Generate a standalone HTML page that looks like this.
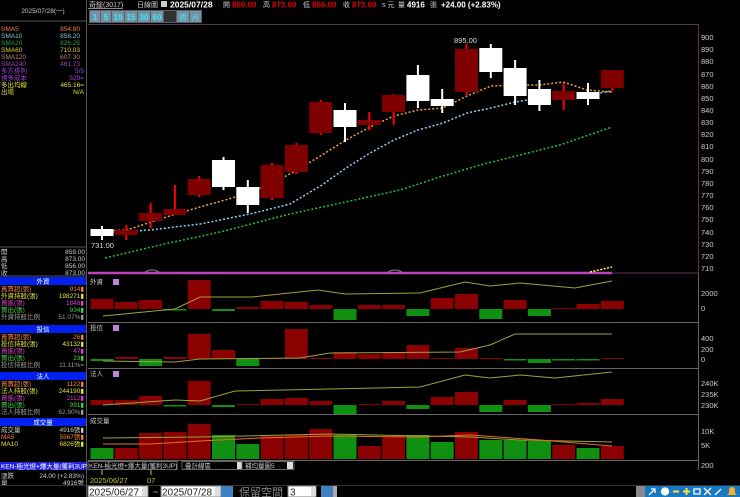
<!DOCTYPE html>
<html><head><meta charset="utf-8"><style>
html,body{margin:0;padding:0;background:#000;width:740px;height:497px;overflow:hidden}
svg{display:block}
text{font-family:"Liberation Sans","Noto Sans CJK TC",sans-serif}
</style></head><body>
<svg width="740" height="497" viewBox="0 0 740 497" xmlns="http://www.w3.org/2000/svg">
<rect width="740" height="497" fill="#000"/>
<line x1="86.5" y1="0" x2="86.5" y2="497" stroke="#555"/>
<line x1="0" y1="21" x2="86" y2="21" stroke="#555"/>
<line x1="0" y1="247" x2="86" y2="247" stroke="#555"/>
<g font-size="6.5">
<text x="43" y="13" fill="#ccc" text-anchor="middle">2025/07/28(一)</text>
<text x="1" y="31" fill="#f08040">SMA5</text><text x="80" y="31" fill="#f08040" text-anchor="end">854.80</text>
<text x="1" y="38" fill="#80c0e0">SMA10</text><text x="80" y="38" fill="#80c0e0" text-anchor="end">858.20</text>
<text x="1" y="45" fill="#20a040">SMA20</text><text x="80" y="45" fill="#20a040" text-anchor="end">826.25</text>
<text x="1" y="52" fill="#e0d040">SMA60</text><text x="80" y="52" fill="#e0d040" text-anchor="end">710.03</text>
<text x="1" y="59" fill="#c08080">SMA120</text><text x="80" y="59" fill="#c08080" text-anchor="end">607.30</text>
<text x="1" y="66" fill="#a040c0">SMA240</text><text x="80" y="66" fill="#a040c0" text-anchor="end">461.73</text>
<text x="1" y="73" fill="#a040e0">多方排列</text><text x="84" y="73" fill="#a040e0" text-anchor="end">5/5</text>
<text x="1" y="80" fill="#a040e0">視多成本</text><text x="84" y="80" fill="#a040e0" text-anchor="end">529=</text>
<text x="1" y="87" fill="#e0e040">多出均線</text><text x="84" y="87" fill="#e0e040" text-anchor="end">465.16=</text>
<text x="1" y="94" fill="#e0e040">出場</text><text x="84" y="94" fill="#e0e040" text-anchor="end">N/A</text>
<g fill="#ccc">
<text x="1" y="254">開</text><text x="85" y="254" text-anchor="end">859.00</text>
<text x="1" y="261">高</text><text x="85" y="261" text-anchor="end">873.00</text>
<text x="1" y="268">低</text><text x="85" y="268" text-anchor="end">856.00</text>
<text x="1" y="275">收</text><text x="85" y="275" text-anchor="end">873.00</text>
</g>
</g>
<line x1="0" y1="276" x2="86" y2="276" stroke="#555"/>
<g font-size="6.5">
<rect x="0" y="277" width="86" height="8" fill="#0020f0"/><text x="43" y="283.5" fill="#fff" text-anchor="middle">外資</text>
<text x="1" y="291" fill="#f08040">買賣超(張)</text><text x="84" y="291" fill="#f08040" text-anchor="end">914▮</text>
<text x="1" y="298" fill="#e0e040">外資持股(張)</text><text x="84" y="298" fill="#e0e040" text-anchor="end">198271▮</text>
<text x="1" y="305" fill="#d040d0">買進(張)</text><text x="84" y="305" fill="#d040d0" text-anchor="end">1848▮</text>
<text x="1" y="312" fill="#40d040">賣出(張)</text><text x="84" y="312" fill="#40d040" text-anchor="end">934▮</text>
<text x="1" y="319" fill="#999">外資持股比例</text><text x="84" y="319" fill="#999" text-anchor="end">51.07%▮</text>
<rect x="0" y="325" width="86" height="8" fill="#0020f0"/><text x="43" y="331.5" fill="#fff" text-anchor="middle">投信</text>
<text x="1" y="339" fill="#f08040">買賣超(張)</text><text x="84" y="339" fill="#f08040" text-anchor="end">26▮</text>
<text x="1" y="346" fill="#e0e040">投信持股(張)</text><text x="84" y="346" fill="#e0e040" text-anchor="end">43132▮</text>
<text x="1" y="353" fill="#d040d0">買進(張)</text><text x="84" y="353" fill="#d040d0" text-anchor="end">47▮</text>
<text x="1" y="360" fill="#40d040">賣出(張)</text><text x="84" y="360" fill="#40d040" text-anchor="end">23▮</text>
<text x="1" y="367" fill="#999">投信持股比例</text><text x="84" y="367" fill="#999" text-anchor="end">11.11%=</text>
<rect x="0" y="372" width="86" height="8" fill="#0020f0"/><text x="43" y="378.5" fill="#fff" text-anchor="middle">法人</text>
<text x="1" y="386" fill="#f08040">買賣超(張)</text><text x="84" y="386" fill="#f08040" text-anchor="end">1122▮</text>
<text x="1" y="393" fill="#e0e040">法人持股(張)</text><text x="84" y="393" fill="#e0e040" text-anchor="end">244190▮</text>
<text x="1" y="400" fill="#d040d0">買進(張)</text><text x="84" y="400" fill="#d040d0" text-anchor="end">2112▮</text>
<text x="1" y="407" fill="#40d040">賣出(張)</text><text x="84" y="407" fill="#40d040" text-anchor="end">991▮</text>
<text x="1" y="414" fill="#999">法人持股比例</text><text x="84" y="414" fill="#999" text-anchor="end">62.90%▮</text>
<rect x="0" y="418" width="86" height="8" fill="#0020f0"/><text x="43" y="424.5" fill="#fff" text-anchor="middle">成交量</text>
<text x="1" y="432" fill="#ccc">成交量</text><text x="84" y="432" fill="#ccc" text-anchor="end">4916張▮</text>
<text x="1" y="439" fill="#f08040">MA5</text><text x="84" y="439" fill="#f08040" text-anchor="end">5567張▮</text>
<text x="1" y="446" fill="#e0e040">MA10</text><text x="84" y="446" fill="#e0e040" text-anchor="end">6826張▮</text>
<rect x="0" y="462" width="86" height="8" fill="#2020e0"/><text x="1" y="468.5" fill="#fff">KEN-極光燈+爆大量(獲利3UP)</text>
<text x="1" y="478" fill="#ccc">漲跌</text><text x="84" y="478" fill="#ccc" text-anchor="end">24.00 (+2.83%)</text>
<text x="1" y="485" fill="#ccc">量</text><text x="84" y="485" fill="#ccc" text-anchor="end">4916張</text>
</g>
<g font-size="7">
<text x="89" y="7" fill="#ccc">奇鋐(3017)</text>
<line x1="88" y1="8.5" x2="123" y2="8.5" stroke="#888"/>
<text x="137" y="7" fill="#ccc">日線圖</text>
<rect x="161" y="1" width="6" height="6" fill="#ccc"/>
<text x="170" y="7.5" fill="#fff" font-weight="bold" font-size="8.5">2025/07/28</text>
<text x="223" y="7" fill="#ccc">開</text><text x="232" y="7.5" fill="#e00000" font-weight="bold" font-size="8">859.00</text>
<text x="263" y="7" fill="#ccc">高</text><text x="272" y="7.5" fill="#e00000" font-weight="bold" font-size="8">873.00</text>
<text x="303" y="7" fill="#ccc">低</text><text x="312" y="7.5" fill="#e00000" font-weight="bold" font-size="8">856.00</text>
<text x="343" y="7" fill="#ccc">收</text><text x="352" y="7.5" fill="#e00000" font-weight="bold" font-size="8">873.00</text>
<text x="382" y="7" fill="#ccc">s 元</text><text x="398" y="7" fill="#ccc">量</text>
<text x="407" y="7.5" fill="#fff" font-weight="bold" font-size="8">4916</text><text x="430" y="7" fill="#ccc">張</text>
<text x="441" y="7.5" fill="#fff" font-weight="bold" font-size="8">+24.00 (+2.83%)</text>
</g>
<rect x="89" y="10" width="113" height="13" fill="#506070"/>
<rect x="90" y="11" width="10" height="11" fill="#7890a0"/>
<rect x="101" y="11" width="10" height="11" fill="#7890a0"/>
<rect x="112" y="11" width="12" height="11" fill="#7890a0"/>
<rect x="125" y="11" width="12" height="11" fill="#7890a0"/>
<rect x="138" y="11" width="12" height="11" fill="#7890a0"/>
<rect x="151" y="11" width="12" height="11" fill="#7890a0"/>
<rect x="164" y="11" width="12" height="11" fill="#303030"/>
<rect x="177" y="11" width="12" height="11" fill="#7890a0"/>
<rect x="190" y="11" width="11" height="11" fill="#7890a0"/>
<g font-size="8" font-weight="bold" fill="#40e8ff" text-anchor="middle">
<text x="95" y="19.8">1</text><text x="106" y="19.8">5</text><text x="118" y="19.8">10</text><text x="131" y="19.8">15</text><text x="144" y="19.8">30</text><text x="157" y="19.8">60</text>
<text x="183" y="19.5" font-size="7" font-weight="normal">週</text><text x="195.5" y="19.5" font-size="7" font-weight="normal">月</text>
</g>
<polyline points="88,24.5 698.5,24.5 698.5,273" fill="none" stroke="#603050"/>
<g font-size="7.5" fill="#ccc">
<text x="701" y="40">900</text><text x="701" y="52">890</text><text x="701" y="64">880</text><text x="701" y="77">870</text><text x="701" y="89">860</text><text x="701" y="101">850</text><text x="701" y="113">840</text><text x="701" y="125">830</text><text x="701" y="137">820</text><text x="701" y="149">810</text><text x="701" y="162">800</text><text x="701" y="174">790</text><text x="701" y="186">780</text><text x="701" y="198">770</text><text x="701" y="210">760</text><text x="701" y="222">750</text><text x="701" y="235">740</text><text x="701" y="247">730</text><text x="701" y="259">720</text><text x="701" y="271">710</text>
<text x="701" y="296">2000</text><text x="701" y="311">0</text>
<text x="701" y="341">400</text><text x="701" y="352">200</text><text x="701" y="362">0</text>
<text x="701" y="386">240K</text><text x="701" y="397">235K</text><text x="701" y="408">230K</text>
<text x="701" y="434">10K</text><text x="701" y="448">5K</text><text x="701" y="468">200</text>
</g>
<polyline points="105,258 160,245 220,232 290,214 350,201 400,190 440,177 480,165 520,155 560,145 612,127" fill="none" stroke="#20c040" stroke-width="1.5" stroke-dasharray="2,2"/>
<polyline points="100,233 150,230 200,224 250,214 290,204 322,185 346,168 370,153 394,140 418,130 443,123 467,113 491,108 515,102 539,98 563,96 587,95 612,91" fill="none" stroke="#90d0f0" stroke-width="1.5" stroke-dasharray="2,2"/>
<polyline points="102,231 127,230 151,222 176,214 200,207 225,200 249,193 273,183 297,170 322,155 346,140 370,127 394,116 418,110 443,108 467,96 491,86 515,85 539,85 563,82 587,90 612,92" fill="none" stroke="#f0a040" stroke-width="1.5" stroke-dasharray="2,2"/>
<g stroke-width="2">
<line x1="102" y1="226" x2="102" y2="240" stroke="#fff"/><rect x="90.5" y="229" width="23" height="7" fill="#fff"/>
<line x1="126.3" y1="225" x2="126.3" y2="240" stroke="#f00"/><rect x="114.8" y="230" width="23" height="5" fill="#800000"/>
<line x1="150.6" y1="203" x2="150.6" y2="228" stroke="#f00"/><rect x="139.1" y="213" width="23" height="8" fill="#800000"/>
<line x1="174.9" y1="185" x2="174.9" y2="215" stroke="#f00"/><rect x="163.4" y="209" width="23" height="6" fill="#800000"/>
<line x1="199.2" y1="176" x2="199.2" y2="197" stroke="#f00"/><rect x="187.7" y="179" width="23" height="16" fill="#800000"/>
<line x1="223.5" y1="157" x2="223.5" y2="190" stroke="#fff"/><rect x="212" y="160" width="23" height="27" fill="#fff"/>
<line x1="247.8" y1="180" x2="247.8" y2="213" stroke="#fff"/><rect x="236.3" y="187" width="23" height="18" fill="#fff"/>
<line x1="272.1" y1="163" x2="272.1" y2="200" stroke="#f00"/><rect x="260.6" y="165" width="23" height="33" fill="#800000"/>
<line x1="296.4" y1="143" x2="296.4" y2="174" stroke="#f00"/><rect x="284.9" y="145" width="23" height="27" fill="#800000"/>
<line x1="320.7" y1="100" x2="320.7" y2="135" stroke="#f00"/><rect x="309.2" y="102" width="23" height="31" fill="#800000"/>
<line x1="345" y1="103" x2="345" y2="142" stroke="#fff"/><rect x="333.5" y="110" width="23" height="17" fill="#fff"/>
<line x1="369.3" y1="112" x2="369.3" y2="130" stroke="#f00"/><rect x="357.8" y="120" width="23" height="5" fill="#800000"/>
<line x1="393.6" y1="94" x2="393.6" y2="125" stroke="#f00"/><rect x="382.1" y="95" width="23" height="17" fill="#800000"/>
<line x1="417.9" y1="65" x2="417.9" y2="108" stroke="#fff"/><rect x="406.4" y="75" width="23" height="26" fill="#fff"/>
<line x1="442.2" y1="89" x2="442.2" y2="113" stroke="#fff"/><rect x="430.7" y="99" width="23" height="7" fill="#fff"/>
<line x1="466.5" y1="44" x2="466.5" y2="95" stroke="#f00"/><rect x="455" y="49" width="23" height="43" fill="#800000"/>
<line x1="490.8" y1="44" x2="490.8" y2="78" stroke="#fff"/><rect x="479.3" y="48" width="23" height="24" fill="#fff"/>
<line x1="515.1" y1="60" x2="515.1" y2="105" stroke="#fff"/><rect x="503.6" y="68" width="23" height="28" fill="#fff"/>
<line x1="539.4" y1="80" x2="539.4" y2="111" stroke="#fff"/><rect x="527.9" y="89" width="23" height="16" fill="#fff"/>
<line x1="563.7" y1="83" x2="563.7" y2="110" stroke="#f00"/><rect x="552.2" y="91" width="23" height="9" fill="#800000"/>
<line x1="588" y1="83" x2="588" y2="105" stroke="#fff"/><rect x="576.5" y="92" width="23" height="7" fill="#fff"/>
<line x1="612.3" y1="70" x2="612.3" y2="91" stroke="#f00"/><rect x="600.8" y="70" width="23" height="18" fill="#800000"/>
</g>
<text x="454" y="43" font-size="7.5" fill="#ddd">895.00</text>
<text x="91" y="248" font-size="7.5" fill="#ddd">731.00</text>
<line x1="88" y1="273" x2="612" y2="273" stroke="#c040c0" stroke-width="2.5"/>
<line x1="612" y1="273" x2="698" y2="273" stroke="#603050"/>
<polyline points="590,272 612,267" stroke="#ffff40" stroke-width="1.5" stroke-dasharray="2,1.5"/>
<path d="M145,272 Q152,268 159,272 M388,272 Q395,268 402,272" stroke="#888" fill="none"/>
<g stroke="#666">
<line x1="88" y1="322.5" x2="698" y2="322.5"/><line x1="88" y1="368.5" x2="698" y2="368.5"/>
<line x1="88" y1="414.5" x2="698" y2="414.5"/><line x1="88" y1="460.5" x2="698" y2="460.5"/>
<line x1="698.5" y1="273" x2="698.5" y2="470"/>
</g>
<g font-size="6.5" fill="#ccc">
<text x="90" y="284">外資</text><text x="90" y="330">投信</text><text x="90" y="376">法人</text><text x="90" y="423">成交量</text>
</g>
<g fill="#c080e0"><rect x="113" y="279" width="6" height="6"/><rect x="113" y="325" width="6" height="6"/><rect x="113" y="371" width="6" height="6"/></g>
<g fill="#8b0000">
<rect x="90.5" y="299" width="23" height="10"/><rect x="114.8" y="302" width="23" height="7"/><rect x="139.1" y="300" width="23" height="9"/><rect x="187.7" y="280" width="23" height="29"/><rect x="236.3" y="307" width="23" height="2"/><rect x="260.6" y="301" width="23" height="8"/><rect x="284.9" y="302" width="23" height="7"/><rect x="309.2" y="305" width="23" height="4"/><rect x="357.8" y="305" width="23" height="4"/><rect x="382.1" y="305" width="23" height="4"/><rect x="430.7" y="298" width="23" height="11"/><rect x="455" y="294" width="23" height="15"/><rect x="503.6" y="300" width="23" height="9"/><rect x="552.2" y="308" width="23" height="1"/><rect x="576.5" y="304" width="23" height="5"/><rect x="600.8" y="301" width="23" height="8"/>
</g>
<g fill="#109010">
<rect x="163.4" y="309" width="23" height="1.5"/><rect x="212" y="309" width="23" height="2"/><rect x="333.5" y="309" width="23" height="11"/><rect x="406.4" y="309" width="23" height="7"/><rect x="479.3" y="309" width="23" height="10"/><rect x="527.9" y="309" width="23" height="7"/>
</g>
<polyline points="103,316 175,309 200,297 252,297 318,290 345,294 420,293 465,282 490,286 520,283 575,288 612,281" fill="none" stroke="#a0a040"/>
<g fill="#8b0000">
<rect x="114.8" y="357" width="23" height="2"/><rect x="163.4" y="357" width="23" height="2"/><rect x="187.7" y="334" width="23" height="25"/><rect x="212" y="350" width="23" height="9"/><rect x="260.6" y="358" width="23" height="1"/><rect x="284.9" y="329" width="23" height="30"/><rect x="309.2" y="358" width="23" height="1"/><rect x="333.5" y="352" width="23" height="7"/><rect x="357.8" y="354" width="23" height="5"/><rect x="382.1" y="352" width="23" height="7"/><rect x="406.4" y="345" width="23" height="14"/><rect x="430.7" y="358" width="23" height="1"/><rect x="455" y="348" width="23" height="11"/><rect x="479.3" y="358" width="23" height="1"/><rect x="600.8" y="358" width="23" height="1"/>
</g>
<g fill="#109010">
<rect x="90.5" y="359" width="23" height="2"/><rect x="139.1" y="359" width="23" height="7"/><rect x="236.3" y="359" width="23" height="7"/><rect x="503.6" y="359" width="23" height="1.5"/><rect x="527.9" y="359" width="23" height="4"/><rect x="552.2" y="359" width="23" height="1.5"/><rect x="576.5" y="359" width="23" height="1.5"/>
</g>
<polyline points="103,361 175,362 200,359 300,358 330,353 460,352 490,345 515,334 612,334" fill="none" stroke="#a0a040"/>
<g fill="#8b0000">
<rect x="90.5" y="400" width="23" height="5"/><rect x="114.8" y="400" width="23" height="5"/><rect x="139.1" y="396" width="23" height="9"/><rect x="187.7" y="381" width="23" height="24"/><rect x="236.3" y="404" width="23" height="1"/><rect x="260.6" y="399" width="23" height="6"/><rect x="284.9" y="398" width="23" height="7"/><rect x="309.2" y="401" width="23" height="4"/><rect x="357.8" y="404" width="23" height="1"/><rect x="382.1" y="401" width="23" height="4"/><rect x="430.7" y="397" width="23" height="8"/><rect x="455" y="392" width="23" height="13"/><rect x="503.6" y="400" width="23" height="5"/><rect x="552.2" y="404" width="23" height="1"/><rect x="576.5" y="403" width="23" height="2"/><rect x="600.8" y="399" width="23" height="6"/>
</g>
<g fill="#109010">
<rect x="163.4" y="405" width="23" height="1.5"/><rect x="212" y="405" width="23" height="2"/><rect x="333.5" y="405" width="23" height="9"/><rect x="406.4" y="405" width="23" height="4"/><rect x="479.3" y="405" width="23" height="7"/><rect x="527.9" y="405" width="23" height="7"/>
</g>
<polyline points="103,405 175,400 200,401 235,391 330,389 420,387 465,375 490,378 520,375 555,378 612,372" fill="none" stroke="#a0a040"/>
<g fill="#8b0000">
<rect x="114.8" y="448" width="23" height="11"/><rect x="139.1" y="433" width="23" height="26"/><rect x="163.4" y="432" width="23" height="27"/><rect x="187.7" y="424" width="23" height="35"/><rect x="260.6" y="436" width="23" height="23"/><rect x="284.9" y="435" width="23" height="24"/><rect x="309.2" y="429" width="23" height="30"/><rect x="357.8" y="446" width="23" height="13"/><rect x="382.1" y="436" width="23" height="23"/><rect x="455" y="432" width="23" height="27"/><rect x="552.2" y="445" width="23" height="14"/><rect x="600.8" y="446" width="23" height="13"/>
</g>
<g fill="#109010">
<rect x="90.5" y="448" width="23" height="11"/><rect x="212" y="435" width="23" height="24"/><rect x="236.3" y="444" width="23" height="15"/><rect x="333.5" y="435" width="23" height="24"/><rect x="406.4" y="435" width="23" height="24"/><rect x="430.7" y="442" width="23" height="17"/><rect x="479.3" y="440" width="23" height="19"/><rect x="503.6" y="440" width="23" height="19"/><rect x="527.9" y="441" width="23" height="18"/><rect x="576.5" y="448" width="23" height="11"/>
</g>
<polyline points="103,438 200,437 330,434 470,437 520,440 612,442" fill="none" stroke="#a0a040"/>
<polyline points="103,444 150,444 200,441 260,438 330,436 420,437 470,435 540,440 612,446" fill="none" stroke="#e07020"/>
<rect x="88" y="461" width="610" height="9" fill="#000"/>
<g font-size="6.5">
<rect x="88" y="461.5" width="89" height="8" fill="#000" stroke="#666"/><text x="89" y="468" fill="#ccc">KEN-極光燈+爆大量(獲利3UP)</text>
<rect x="182" y="461.5" width="62" height="8" fill="#000" stroke="#666"/><text x="185" y="468" fill="#ccc">疊計線區</text><rect x="237" y="462" width="6" height="7" fill="#ddd"/>
<rect x="242" y="461.5" width="52" height="8" fill="#000" stroke="#666"/><text x="245" y="468" fill="#ccc">補均量圖5</text><rect x="287" y="462" width="6" height="7" fill="#ddd"/>
</g>
<line x1="102" y1="470" x2="102" y2="475" stroke="#c0c040"/><line x1="151" y1="470" x2="151" y2="475" stroke="#c0c040"/>
<text x="90" y="483" font-size="7.5" fill="#c0c040">2025/06/27</text>
<text x="147" y="483" font-size="7.5" fill="#c0c040">07</text>
<line x1="0" y1="485.5" x2="740" y2="485.5" stroke="#333"/>
<rect x="88" y="486" width="60" height="11" fill="#fff" stroke="#777"/><text x="89" y="495.5" font-size="10" fill="#222">2025/06/27</text><rect x="142" y="487" width="5" height="9" fill="#ddd"/>
<text x="153" y="495" font-size="9" fill="#ccc">~</text>
<rect x="161" y="486" width="60" height="11" fill="#fff" stroke="#777"/><text x="162" y="495.5" font-size="10" fill="#222">2025/07/28</text><rect x="215" y="487" width="5" height="9" fill="#ddd"/>
<rect x="221" y="486" width="12" height="11" fill="#4080c0"/>
<text x="239" y="496" font-size="11" fill="#888">保留空間</text>
<rect x="288" y="486" width="28" height="11" fill="#fff" stroke="#777"/><text x="290" y="495.5" font-size="10" fill="#222">3</text><rect x="311" y="487" width="5" height="9" fill="#ddd"/>
<rect x="321" y="486" width="12" height="11" fill="#4080c0"/><rect x="333" y="486" width="4" height="11" fill="#aaa"/>
<rect x="636" y="486" width="104" height="11" fill="#1878c0"/>
<rect x="636" y="486" width="9" height="11" fill="#888"/>
<g stroke="#fff" stroke-width="1.3" fill="none">
<path d="M649,495 L655,489 M651,489 L655,489 L655,493"/>
<circle cx="665" cy="491.5" r="3.5" fill="#fff"/>
<line x1="673" y1="491.5" x2="679" y2="491.5" stroke="#ffe040" stroke-width="2"/>
<path d="M683,491.5 H690 M686.5,488 V495" stroke="#ffe040" stroke-width="2"/>
<path d="M694,489 h6 v5 h-6 z"/>
<path d="M704,488 l7,7 M711,488 l-7,7"/>
<path d="M715,495 l6,-6"/>
</g>
<path d="M727,495 h10 l-2,-2 v-3 a3,3 0 0 0 -6,0 v3 z" fill="#ffb020"/>
</svg>
</body></html>
